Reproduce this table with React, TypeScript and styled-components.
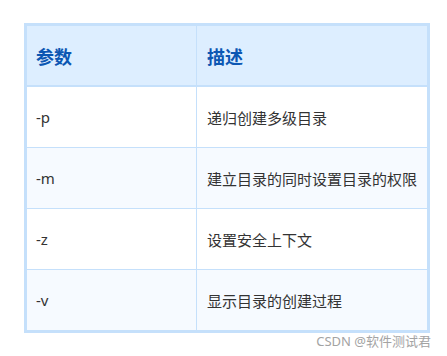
import { createGlobalStyle } from 'styled-components';
import styled from 'styled-components';

const GlobalStyle = createGlobalStyle`
    html, body {
        margin: 0;
        padding: 0;
        background: #ffffff;
    }
    body {
        font-family: 'Noto Sans', 'Noto Sans CJK SC', sans-serif;
    }
`;

const Page = styled.div`
    width: 447px;
    height: 356px;
    padding-top: 23px;
    box-sizing: border-box;
`;

const Table = styled.div`
    margin-left: 24px;
    width: 406px;
    box-sizing: border-box;
    border: 3px solid #c5e0fb;
    display: grid;
    grid-template-columns: 170px 1fr;
`;

const HeadCell = styled.div<{ $first?: boolean }>`
    height: 61px;
    box-sizing: border-box;
    display: flex;
    align-items: center;
    padding-left: ${(p) => (p.$first ? '9px' : '10px')};
    background: #ddeeff;
    border-bottom: 2px solid #c5e0fb;
    border-right: ${(p) => (p.$first ? '1px solid #c5e0fb' : 'none')};
    color: #0c57b3;
    font-size: 18px;
    font-weight: 700;
`;

const Cell = styled.div<{ $first?: boolean; $alt?: boolean; $last?: boolean }>`
    height: ${(p) => (p.$last ? '60px' : '61px')};
    box-sizing: border-box;
    display: flex;
    align-items: center;
    padding-left: ${(p) => (p.$first ? '9px' : '10px')};
    background: ${(p) => (p.$alt ? '#f6faff' : '#ffffff')};
    border-bottom: ${(p) => (p.$last ? 'none' : '1px solid #c5e0fb')};
    border-right: ${(p) => (p.$first ? '1px solid #c5e0fb' : 'none')};
    color: #333333;
    font-size: 15px;
`;

const Watermark = styled.div`
    width: 431px;
    text-align: right;
    color: #a3a3a3;
    font-size: 13px;
    line-height: 16px;
`;

const rows = [
    ['-p', '递归创建多级目录'],
    ['-m', '建立目录的同时设置目录的权限'],
    ['-z', '设置安全上下文'],
    ['-v', '显示目录的创建过程']
];

const App = () => {
    return (
        <Page>
            <GlobalStyle />
            <Table>
                <HeadCell $first>参数</HeadCell>
                <HeadCell>描述</HeadCell>
                {rows.map(([opt, desc], i) => {
                    const alt = i % 2 === 1;
                    const last = i === rows.length - 1;
                    return [
                        <Cell key={opt + 'a'} $first $alt={alt} $last={last}>
                            {opt}
                        </Cell>,
                        <Cell key={opt + 'b'} $alt={alt} $last={last}>
                            {desc}
                        </Cell>
                    ];
                })}
            </Table>
            <Watermark>CSDN @软件测试君</Watermark>
        </Page>
    );
};

export default App;
